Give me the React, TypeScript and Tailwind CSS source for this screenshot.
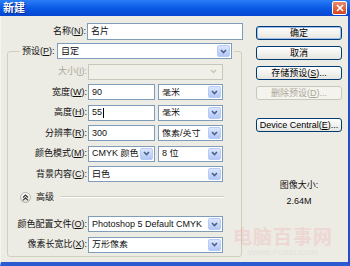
const font = "font-['Liberation_Sans','Noto_Sans_CJK_SC',sans-serif]";

const Arrow = ({ disabled }: { disabled?: boolean }) =>
  disabled ? (
    <div className="ml-auto mr-[2px] flex h-[12px] w-[13px] shrink-0 items-center justify-center">
      <svg width="7" height="5" viewBox="0 0 7 5">
        <path d="M1 1l2.5 2.5L6 1" stroke="#c9c7ba" strokeWidth="1.5" fill="none" />
      </svg>
    </div>
  ) : (
    <div className="ml-auto mr-[1px] flex h-[12px] w-[13px] shrink-0 items-center justify-center rounded-[2px] border border-[#b6cbf6] bg-linear-to-b from-[#dbe6fe] to-[#b2c7f7]">
      <svg width="7" height="5" viewBox="0 0 7 5">
        <path d="M1 1l2.5 2.5L6 1" stroke="#4d6185" strokeWidth="1.6" fill="none" />
      </svg>
    </div>
  );

const Select = ({ className, children, disabled }: any) => (
  <div
    className={
      "flex h-[16px] items-center overflow-hidden border pl-[3px] " +
      (disabled ? "border-[#c9c7ba] bg-[#f0efe8] " : "border-[#7f9db9] bg-white ") +
      className
    }
  >
    <span className="overflow-hidden whitespace-nowrap">{children}</span>
    <Arrow disabled={disabled} />
  </div>
);

const Input = ({ className, children }: any) => (
  <div className={"flex h-[16px] items-center border border-[#7f9db9] bg-white pl-[3px] " + className}>
    {children}
  </div>
);

const Row = ({ label, children, className }: any) => (
  <div className={"flex h-[16px] items-center " + (className || "")}>
    <div className="w-[80px] whitespace-nowrap pr-[1px] text-right">{label}</div>
    {children}
  </div>
);

const Button = ({ children, disabled, main, className }: any) => (
  <div
    className={
      "flex h-[14px] w-[86px] items-center justify-center rounded-[3px] border whitespace-nowrap " +
      (disabled
        ? "border-[#c9c7ba] bg-[#f4f3ee] text-[#aca899] "
        : "border-[#003c74] bg-linear-to-b from-white to-[#e6e5de] text-black ") +
      (main ? "shadow-[inset_0_0_0_1px_#9fbdf0] " : "") +
      (className || "")
    }
  >
    {children}
  </div>
);

export default function App() {
  return (
    <div className={`flex h-[266px] w-[350px] flex-col overflow-hidden text-[9px] leading-none text-[#111] ${font}`}>
      {/* title bar */}
      <div className="flex h-[16px] items-center bg-linear-to-b from-[#2a7df5] via-[#0a5ae6] to-[#0546cf] pl-[3px] pr-[3px]">
        <span className="text-[11px] font-bold text-white [text-shadow:1px_1px_0_#0a2a8a]">新建</span>
        <div className="ml-auto flex h-[14px] w-[15px] items-center justify-center rounded-[2px] border border-white bg-linear-to-b from-[#e88a6a] to-[#d2421a]">
          <svg width="8" height="8" viewBox="0 0 8 8">
            <path d="M1 1l6 6M7 1L1 7" stroke="white" strokeWidth="1.7" />
          </svg>
        </div>
      </div>

      {/* body */}
      <div className="relative flex flex-1 border-r-[2px] border-b-[4px] border-l border-r-[#1d50c8] border-b-[#2a5bd0] border-l-[#f4f4f0] bg-[#ecebe4]">
        <div className="flex w-[243px] flex-col pt-[7px]">
          <div className="flex h-[17px] items-center">
            <div className="w-[86px] whitespace-nowrap pr-[1px] text-right">
              名称(<span className="underline">N</span>):
            </div>
            <Input className="h-[17px] w-[156px]">名片</Input>
          </div>

          <fieldset className="mt-[3px] ml-[6px] w-[235px] rounded-[3px] border border-[#d0d0bf] pb-[3px]">
            <legend className="ml-[12px] flex items-center px-[2px]">
              <span className="w-[33px] whitespace-nowrap">
                预设(<span className="underline">P</span>):
              </span>
              <Select className="ml-[2px] w-[175px]">自定</Select>
            </legend>

            <div className="flex flex-col gap-[4.5px] pt-[4.5px]">
              <Row label={<span className="text-[#aca899]">大小(<span className="underline">I</span>):</span>}>
                <Select disabled className="w-[135px]"> </Select>
              </Row>
              <Row label={<>宽度(<span className="underline">W</span>):</>}>
                <Input className="w-[67px]">90</Input>
                <Select className="ml-[3px] w-[65px]">毫米</Select>
              </Row>
              <Row label={<>高度(<span className="underline">H</span>):</>}>
                <Input className="w-[67px]">
                  55<span className="ml-[1px] inline-block h-[10px] w-[1px] bg-black" />
                </Input>
                <Select className="ml-[3px] w-[65px]">毫米</Select>
              </Row>
              <Row label={<>分辨率(<span className="underline">R</span>):</>}>
                <Input className="w-[67px]">300</Input>
                <Select className="ml-[3px] w-[65px]">像素/英寸</Select>
              </Row>
              <Row label={<>颜色模式(<span className="underline">M</span>):</>}>
                <Select className="w-[67px]">CMYK 颜色</Select>
                <Select className="ml-[3px] w-[65px]">8 位</Select>
              </Row>
              <Row label={<>背景内容(<span className="underline">C</span>):</>}>
                <Select className="w-[135px]">白色</Select>
              </Row>

              <div className="mt-[2.5px] flex h-[16px] items-center pl-[12px]">
                <div className="flex h-[11px] w-[11px] items-center justify-center rounded-full border border-[#b5b3a5] bg-linear-to-b from-white to-[#e2e1da]">
                  <svg width="7" height="7" viewBox="0 0 7 7">
                    <path d="M1 3.5l2.5-2.5L6 3.5M1 6.3l2.5-2.5L6 6.3" stroke="#333" strokeWidth="1.1" fill="none" />
                  </svg>
                </div>
                <span className="ml-[5px]">高级</span>
                <div className="ml-[6px] h-[2px] w-[164px] border-t border-b border-t-[#d0d0bf] border-b-white" />
              </div>

              <Row className="mt-[6.5px]" label={<>颜色配置文件(<span className="underline">O</span>):</>}>
                <Select className="w-[135px]">Photoshop 5 Default CMYK</Select>
              </Row>
              <Row label={<>像素长宽比(<span className="underline">X</span>):</>}>
                <Select className="w-[135px]">方形像素</Select>
              </Row>
            </div>
          </fieldset>
        </div>

        <div className="ml-[12px] flex flex-col pt-[10px]">
          <div className="flex flex-col gap-[6px]">
            <Button main>确定</Button>
            <Button>取消</Button>
            <Button>
              存储预设(<span className="underline">S</span>)...
            </Button>
            <Button disabled>
              删除预设(<span className="underline">D</span>)...
            </Button>
          </div>
          <Button className="mt-[18px]">
            Device Central(<span className="underline">E</span>)...
          </Button>
          <div className="mt-[49px] text-center">图像大小:</div>
          <div className="mt-[7px] text-center">2.64M</div>
        </div>

        {/* watermark */}
        <div className="pointer-events-none absolute top-[212px] left-[232px] flex flex-col items-center opacity-[0.18]">
          <span className="text-[19px] font-bold tracking-[1px] text-[#f08088]">电脑百事网</span>
          <span className="mt-[2px] text-[8px] text-[#b8b8b8]">WWW.PC841.COM</span>
        </div>
      </div>
    </div>
  );
}
